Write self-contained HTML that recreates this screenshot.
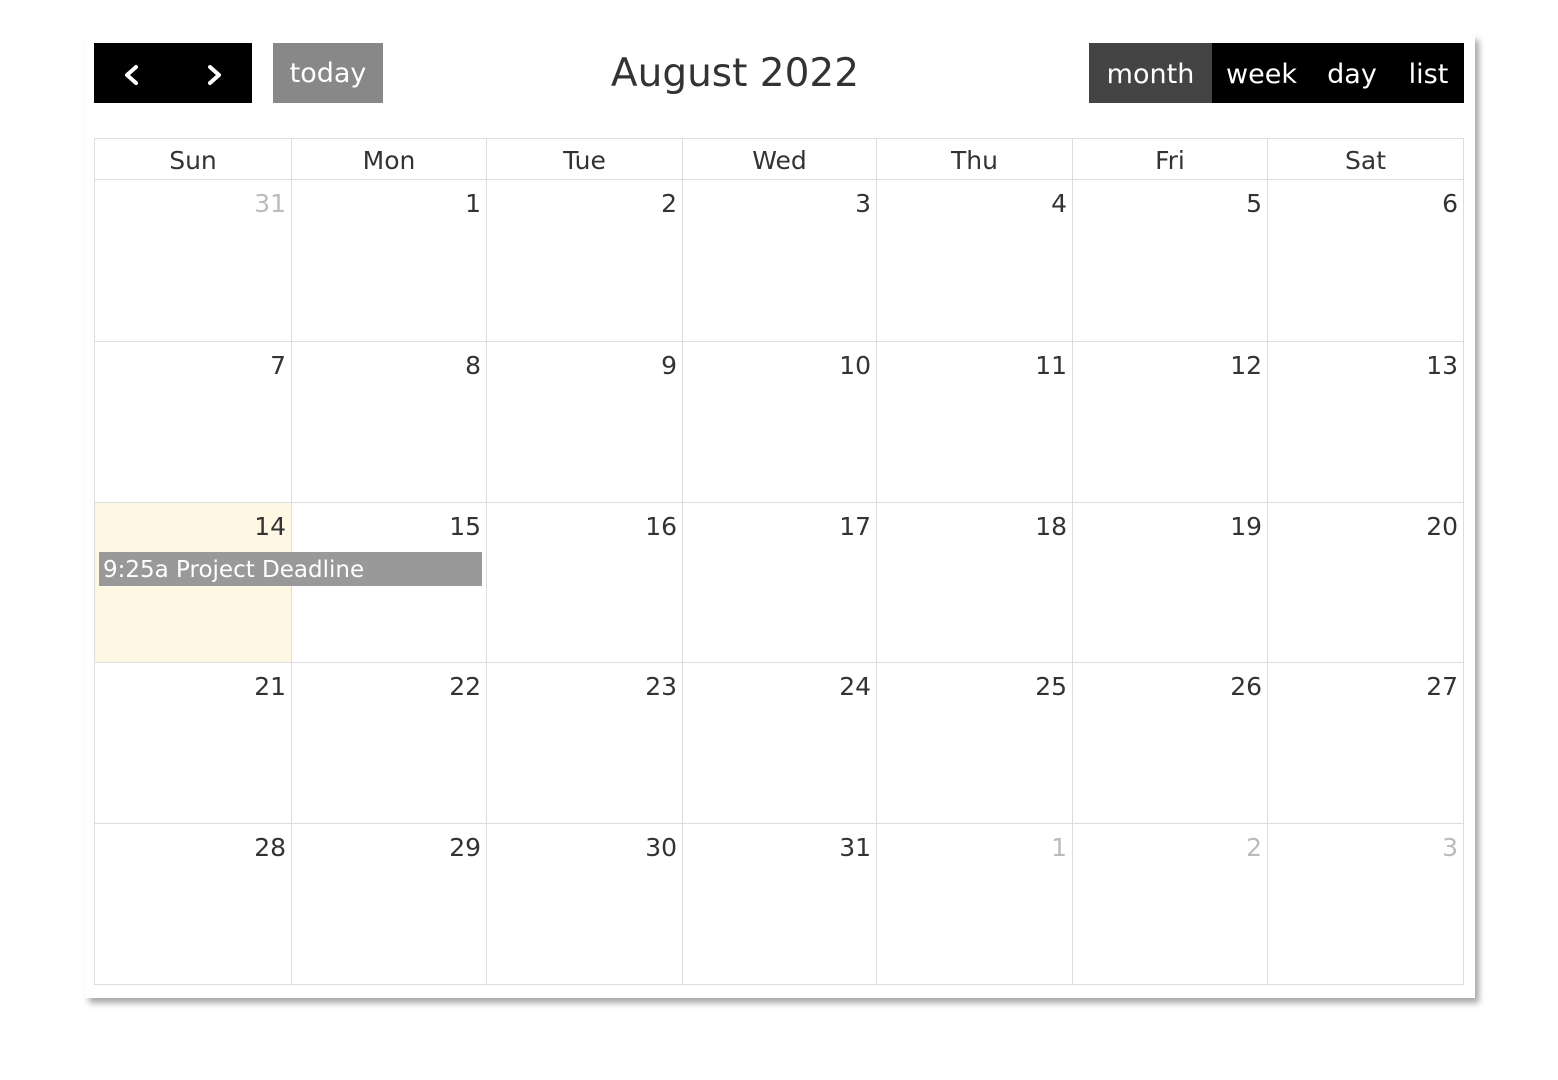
<!DOCTYPE html>
<html><head><meta charset="utf-8"><style>
body{margin:0;width:1558px;height:1080px;background:#fff;font-family:"DejaVu Sans","Liberation Sans",sans-serif;position:relative;overflow:hidden}
.card{position:absolute;left:85px;top:35px;width:1390px;height:963px;background:#fff;box-shadow:4px 5px 6px rgba(0,0,0,.35)}
.a{position:absolute}
.btn{position:absolute;color:#fff;font-size:27px;line-height:63px;top:43px;height:60px;text-align:center}
.grid{position:absolute;left:94px;top:138px;display:grid;grid-template-columns:197px 195px 196px 194px 196px 195px 196px;grid-template-rows:41px 162px 161px 160px 161px 161px;border-top:1px solid #ddd;border-left:1px solid #ddd}
.grid div{border-right:1px solid #ddd;border-bottom:1px solid #ddd;box-sizing:border-box;color:#333;font-size:25px}
.h{text-align:center;line-height:43px}
.d{text-align:right;padding:8px 5px 0 0;line-height:32px}
.o{color:#bbb!important}
.t{background:#fdf7e3}
</style></head><body>
<div class="card"></div>
<div class="btn" style="left:94px;width:158px;background:#000">
<svg width="158" height="60" style="position:absolute;left:0;top:0"><path d="M42 24 L33 32 L42 40" stroke="#fff" stroke-width="4" fill="none" stroke-linecap="round" stroke-linejoin="round"/><path d="M116 24 L125 32 L116 40" stroke="#fff" stroke-width="4" fill="none" stroke-linecap="round" stroke-linejoin="round"/></svg></div>
<div class="btn" style="left:273px;width:110px;background:#888;line-height:62px">today</div>
<div class="a" style="left:535px;width:400px;top:46px;text-align:center;font-size:39px;color:#333;line-height:56px">August 2022</div>
<div class="btn" style="left:1089px;width:123px;background:#444">month</div>
<div class="btn" style="left:1212px;width:252px;background:#000"></div>
<div class="btn" style="left:1212px;width:99px">week</div>
<div class="btn" style="left:1311px;width:82px">day</div>
<div class="btn" style="left:1393px;width:71px">list</div>
<div class="grid">
<div class="h">Sun</div><div class="h">Mon</div><div class="h">Tue</div><div class="h">Wed</div><div class="h">Thu</div><div class="h">Fri</div><div class="h">Sat</div>
<div class="d o">31</div><div class="d">1</div><div class="d">2</div><div class="d">3</div><div class="d">4</div><div class="d">5</div><div class="d">6</div>
<div class="d">7</div><div class="d">8</div><div class="d">9</div><div class="d">10</div><div class="d">11</div><div class="d">12</div><div class="d">13</div>
<div class="d t">14</div><div class="d">15</div><div class="d">16</div><div class="d">17</div><div class="d">18</div><div class="d">19</div><div class="d">20</div>
<div class="d">21</div><div class="d">22</div><div class="d">23</div><div class="d">24</div><div class="d">25</div><div class="d">26</div><div class="d">27</div>
<div class="d">28</div><div class="d">29</div><div class="d">30</div><div class="d">31</div><div class="d o">1</div><div class="d o">2</div><div class="d o">3</div>
</div>
<div class="a" style="left:99px;top:552px;width:383px;height:34px;background:#999;color:#fff;font-size:23px;line-height:36px;padding-left:4px;box-sizing:border-box">9:25a Project Deadline</div>
</body></html>
